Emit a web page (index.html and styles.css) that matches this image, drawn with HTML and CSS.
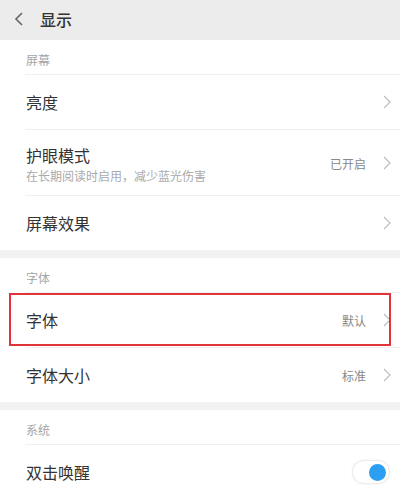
FILE: index.html
```html
<!DOCTYPE html>
<html lang="zh">
<head>
<meta charset="utf-8">
<title>显示</title>
<link rel="stylesheet" href="styles.css">
</head>
<body>
<div class="page">
  <header class="topbar">
    <svg class="back" width="10" height="14" viewBox="0 0 10 14"><polyline points="8,1 2,7 8,13" fill="none" stroke="#666" stroke-width="1.6"/></svg>
    <span class="title">显示</span>
  </header>

  <section class="group">
    <div class="label">屏幕</div>
    <div class="item">
      <span class="name">亮度</span>
      <span class="right"><svg class="chev" width="8" height="14" viewBox="0 0 8 14"><polyline points="1,1 7,7 1,13" fill="none" stroke="#bdbdbd" stroke-width="1.2"/></svg></span>
    </div>
    <div class="item tall">
      <span class="texts">
        <span class="name">护眼模式</span>
        <span class="sub">在长期阅读时启用，减少蓝光伤害</span>
      </span>
      <span class="right"><span class="value">已开启</span><svg class="chev" width="8" height="14" viewBox="0 0 8 14"><polyline points="1,1 7,7 1,13" fill="none" stroke="#bdbdbd" stroke-width="1.2"/></svg></span>
    </div>
    <div class="item last">
      <span class="name">屏幕效果</span>
      <span class="right"><svg class="chev" width="8" height="14" viewBox="0 0 8 14"><polyline points="1,1 7,7 1,13" fill="none" stroke="#bdbdbd" stroke-width="1.2"/></svg></span>
    </div>
  </section>

  <div class="gap"></div>

  <section class="group">
    <div class="label">字体</div>
    <div class="item marked">
      <span class="name">字体</span>
      <span class="right"><span class="value">默认</span><svg class="chev" width="8" height="14" viewBox="0 0 8 14"><polyline points="1,1 7,7 1,13" fill="none" stroke="#bdbdbd" stroke-width="1.2"/></svg></span>
    </div>
    <div class="item last">
      <span class="name">字体大小</span>
      <span class="right"><span class="value">标准</span><svg class="chev" width="8" height="14" viewBox="0 0 8 14"><polyline points="1,1 7,7 1,13" fill="none" stroke="#bdbdbd" stroke-width="1.2"/></svg></span>
    </div>
  </section>

  <div class="gap"></div>

  <section class="group">
    <div class="label">系统</div>
    <div class="item last">
      <span class="name">双击唤醒</span>
      <span class="right toggle-wrap"><span class="toggle"><span class="knob"></span></span></span>
    </div>
  </section>
</div>
</body>
</html>
```

FILE: styles.css
```css
* { box-sizing: border-box; }
html, body { margin: 0; padding: 0; }
body {
  width: 400px;
  height: 493px;
  overflow: hidden;
  background: #ffffff;
  font-family: "Noto Sans CJK SC", "Noto Sans", sans-serif;
  color: #333;
}
.topbar {
  height: 40px;
  background: #ececec;
  display: flex;
  align-items: center;
  padding-left: 14px;
}
.back { display: block; margin-right: 16px; margin-top: -2px; }
.title {
  font-size: 16px;
  font-weight: 500;
  color: #333;
  line-height: 20px;
  margin-top: -3px;
}
.group {
  padding-left: 25px;
  background: #fff;
}
.label {
  height: 35px;
  padding-top: 12px;
  font-size: 12px;
  line-height: 16px;
  color: #a5a5a5;
  border-bottom: 1px solid #efefef;
  padding-left: 1px;
}
.item {
  position: relative;
  height: 55px;
  display: flex;
  align-items: center;
  justify-content: space-between;
  padding-left: 1px;
  padding-right: 9px;
  border-bottom: 1px solid #efefef;
}
.item.tall { height: 66px; padding-top: 1px; }
.item.last { border-bottom: none; height: 54px; }
.name {
  font-size: 16px;
  line-height: 24px;
  color: #333;
}
.texts { display: flex; flex-direction: column; }
.sub {
  font-size: 12px;
  line-height: 17px;
  color: #aaa;
}
.right { display: flex; align-items: center; }
.value {
  font-size: 12px;
  color: #888;
  margin-right: 17px;
}
.chev { display: block; }
.gap { height: 8px; background: #f2f2f2; }
.marked::after {
  content: "";
  position: absolute;
  left: -16px;
  right: 9px;
  top: 0;
  bottom: 1px;
  border: 2px solid #e2323a;
}
.toggle-wrap { padding-right: 1px; }
.toggle {
  width: 38px;
  height: 24px;
  border-radius: 12px;
  background: #fff;
  border: 1px solid #ececec;
  box-shadow: 0 0 2px rgba(0,0,0,0.08);
  display: flex;
  align-items: center;
  justify-content: flex-end;
  padding-right: 3px;
}
.knob {
  width: 17px;
  height: 17px;
  border-radius: 50%;
  background: #2d9ff3;
}
```
